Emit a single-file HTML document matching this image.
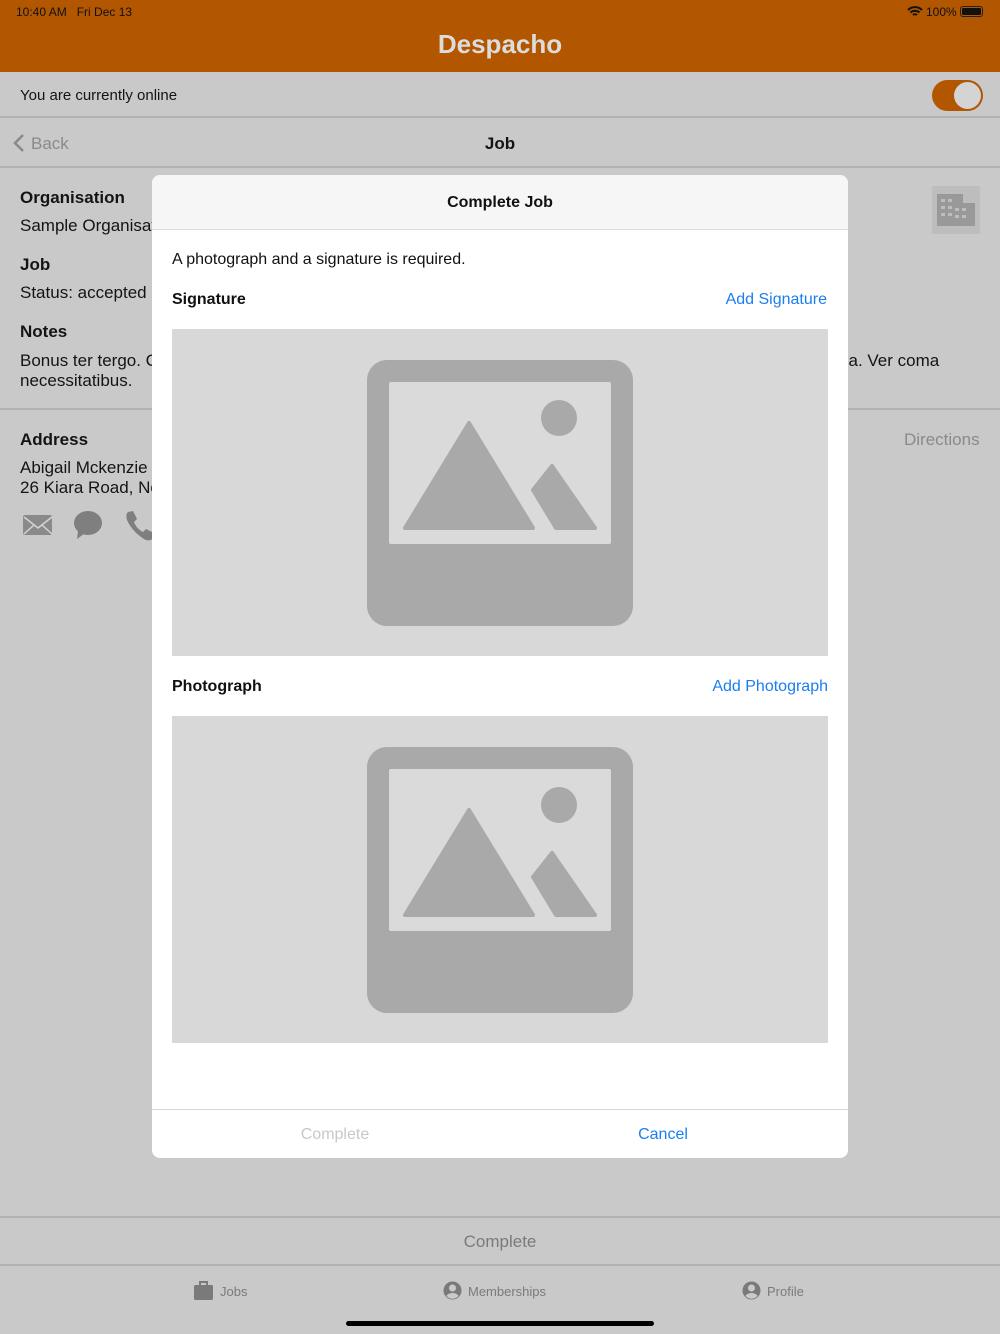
<!DOCTYPE html>
<html><head><meta charset="utf-8"><style>
*{margin:0;padding:0;box-sizing:border-box}
body{width:1000px;height:1334px;position:relative;overflow:hidden;font-family:"Liberation Sans",sans-serif;background:#c9c9c9;color:#141414}
.a{position:absolute;white-space:nowrap}
.hl{position:absolute;left:0;width:1000px;height:2px;background:#b2b2b2}
.img{position:absolute;left:172px;width:656px;height:327px;background:#d8d8d8}
</style></head><body>
<div class="a" style="left:0;top:0;width:1000px;height:72px;background:#b35600"></div>
<div class="a" style="left:16px;top:5px;font-size:12px;color:#111">10:40 AM&nbsp;&nbsp; Fri Dec 13</div>
<div class="a" style="left:926px;top:5px;font-size:12px;color:#111">100%</div>
<svg class="a" style="left:907px;top:6px" width="16" height="12" viewBox="0 0 16 12"><path d="M1 4a10 10 0 0 1 14 0M3.5 6.5a6.5 6.5 0 0 1 9 0M6 9a3 3 0 0 1 4 0" stroke="#111" stroke-width="2" fill="none"/></svg>
<div class="a" style="left:960px;top:6px;width:23px;height:11px;border:1px solid #222;border-radius:3px;padding:1px"><div style="width:100%;height:100%;background:#111;border-radius:1px"></div></div>
<div class="a" style="left:0;top:29px;width:1000px;text-align:center;font-size:26px;font-weight:bold;color:#dcdcdc">Despacho</div>
<div class="a" style="left:20px;top:87px;font-size:15px">You are currently online</div>
<div class="a" style="left:932px;top:80px;width:51px;height:31px;border-radius:16px;background:#b35600"><div style="position:absolute;right:2px;top:2px;width:27px;height:27px;border-radius:50%;background:#d4d4d4"></div></div>
<div class="hl" style="top:116px"></div>
<svg class="a" style="left:12px;top:133px" width="14" height="20"><path d="M11 2L3 10l8 8" stroke="#8a8a8a" stroke-width="2.5" fill="none"/></svg>
<div class="a" style="left:31px;top:134px;font-size:17px;color:#8a8a8a">Back</div>
<div class="a" style="left:0;top:134px;width:1000px;text-align:center;font-size:17px;font-weight:bold">Job</div>
<div class="hl" style="top:166px"></div>
<div class="a" style="left:20px;top:188px;font-size:17px;font-weight:bold">Organisation</div>
<div class="a" style="left:20px;top:216px;font-size:17px">Sample Organisat</div>
<div class="a" style="left:20px;top:255px;font-size:17px;font-weight:bold">Job</div>
<div class="a" style="left:20px;top:283px;font-size:17px">Status: accepted</div>
<div class="a" style="left:20px;top:322px;font-size:17px;font-weight:bold">Notes</div>
<div class="a" style="left:20px;top:351px;font-size:17px;line-height:20px">Bonus ter tergo. C<br>necessitatibus.</div>
<div class="a" style="left:840px;top:351px;font-size:17px">sa. Ver coma</div>
<div class="a" style="left:932px;top:186px;width:48px;height:48px;background:#bdbdbd"><svg width="48" height="48"><rect x="5" y="8" width="26" height="32" fill="#999"/><rect x="25" y="17" width="18" height="23" fill="#999"/><g fill="#bdbdbd"><rect x="9" y="13" width="4" height="3"/><rect x="16" y="13" width="4" height="3"/><rect x="9" y="20" width="4" height="3"/><rect x="16" y="20" width="4" height="3"/><rect x="9" y="27" width="4" height="3"/><rect x="16" y="27" width="4" height="3"/><rect x="30" y="22" width="4" height="3"/><rect x="30" y="29" width="4" height="3"/><rect x="23" y="22" width="4" height="3"/><rect x="23" y="29" width="4" height="3"/></g></svg></div>
<div class="hl" style="top:408px"></div>
<div class="a" style="left:20px;top:430px;font-size:17px;font-weight:bold">Address</div>
<div class="a" style="left:20px;top:458px;font-size:17px;line-height:20px">Abigail Mckenzie<br>26 Kiara Road, No</div>
<div class="a" style="left:904px;top:430px;font-size:17px;color:#8a8a8a">Directions</div>
<svg class="a" style="left:22px;top:514px" width="32" height="22"><rect x="1" y="1" width="29" height="20" rx="2" fill="#8a8a8a"/><path d="M2 3l14 11 14-11M2 20l10-9M30 20l-10-9" stroke="#d4d4d4" stroke-width="1.5" fill="none"/></svg>
<svg class="a" style="left:72px;top:510px" width="32" height="30"><ellipse cx="16" cy="13" rx="14" ry="12" fill="#7f7f7f"/><path d="M6 21l-1 8 8-6z" fill="#7f7f7f"/></svg>
<svg class="a" style="left:124px;top:510px" width="30" height="32"><path d="M4 2l5-1 4 8-3 3c2 5 5 8 9 10l3-3 8 4-1 5c-2 3-6 3-9 1C12 24 6 17 3 10 2 7 2 4 4 2z" fill="#7f7f7f"/></svg>
<div class="hl" style="top:1216px"></div>
<div class="a" style="left:0;top:1232px;width:1000px;text-align:center;font-size:17px;color:#7a7a7a">Complete</div>
<div class="hl" style="top:1264px"></div>
<svg class="a" style="left:194px;top:1281px" width="20" height="19"><rect x="0" y="4" width="19" height="15" rx="1.5" fill="#7a7a7a"/><rect x="6" y="1" width="7" height="4" fill="none" stroke="#7a7a7a" stroke-width="2"/></svg>
<div class="a" style="left:220px;top:1284px;font-size:13px;color:#7a7a7a">Jobs</div>
<svg class="a" style="left:443px;top:1281px" width="19" height="19"><circle cx="9.5" cy="9.5" r="9" fill="#7a7a7a"/><circle cx="9.5" cy="7" r="3.5" fill="#cacaca"/><path d="M3.5 15c2-4 10-4 12 0a8 8 0 0 1-12 0z" fill="#cacaca"/></svg>
<div class="a" style="left:468px;top:1284px;font-size:13px;color:#7a7a7a">Memberships</div>
<svg class="a" style="left:742px;top:1281px" width="19" height="19"><circle cx="9.5" cy="9.5" r="9" fill="#7a7a7a"/><circle cx="9.5" cy="7" r="3.5" fill="#cacaca"/><path d="M3.5 15c2-4 10-4 12 0a8 8 0 0 1-12 0z" fill="#cacaca"/></svg>
<div class="a" style="left:767px;top:1284px;font-size:13px;color:#7a7a7a">Profile</div>
<div class="a" style="left:346px;top:1321px;width:308px;height:5px;border-radius:3px;background:#000"></div>

<div class="a" style="left:152px;top:175px;width:696px;height:983px;background:#fff;border-radius:8px;overflow:hidden">
<div class="a" style="left:0;top:0;width:696px;height:55px;background:#f6f6f6;border-bottom:1px solid #dcdcdc"></div>
<div class="a" style="left:0;top:19px;width:696px;text-align:center;font-size:16px;font-weight:bold;color:#111">Complete Job</div>
<div class="a" style="left:20px;top:76px;font-size:16px;color:#111">A photograph and a signature is required.</div>
<div class="a" style="left:20px;top:116px;font-size:16px;font-weight:bold;color:#111">Signature</div>
<div class="a" style="right:21px;top:116px;font-size:16px;color:#1a7ef2">Add Signature</div>
<div class="a" style="left:20px;top:503px;font-size:16px;font-weight:bold;color:#111">Photograph</div>
<div class="a" style="right:20px;top:503px;font-size:16px;color:#1a7ef2">Add Photograph</div>
<div class="a" style="left:0;top:934px;width:696px;height:1px;background:#d6d6d6"></div>
<div class="a" style="left:0;top:951px;width:366px;text-align:center;font-size:16px;color:#c8c8c8">Complete</div>
<div class="a" style="left:330px;top:951px;width:362px;text-align:center;font-size:16px;color:#1a7ef2">Cancel</div>
</div>
<div class="img" style="top:329px"><svg width="656" height="327"><rect x="195" y="31" width="266" height="266" rx="20" fill="#a9a9a9"/><rect x="217" y="53" width="222" height="162" rx="2" fill="#dadada"/><path d="M297 94L233 199H361Z" fill="#a9a9a9" stroke="#a9a9a9" stroke-width="4" stroke-linejoin="round"/><path d="M380 137L361 161L384 199H423Z" fill="#a9a9a9" stroke="#a9a9a9" stroke-width="4" stroke-linejoin="round"/><circle cx="387" cy="89" r="18" fill="#a9a9a9"/></svg></div>
<div class="img" style="top:716px"><svg width="656" height="327"><rect x="195" y="31" width="266" height="266" rx="20" fill="#a9a9a9"/><rect x="217" y="53" width="222" height="162" rx="2" fill="#dadada"/><path d="M297 94L233 199H361Z" fill="#a9a9a9" stroke="#a9a9a9" stroke-width="4" stroke-linejoin="round"/><path d="M380 137L361 161L384 199H423Z" fill="#a9a9a9" stroke="#a9a9a9" stroke-width="4" stroke-linejoin="round"/><circle cx="387" cy="89" r="18" fill="#a9a9a9"/></svg></div>
</body></html>
